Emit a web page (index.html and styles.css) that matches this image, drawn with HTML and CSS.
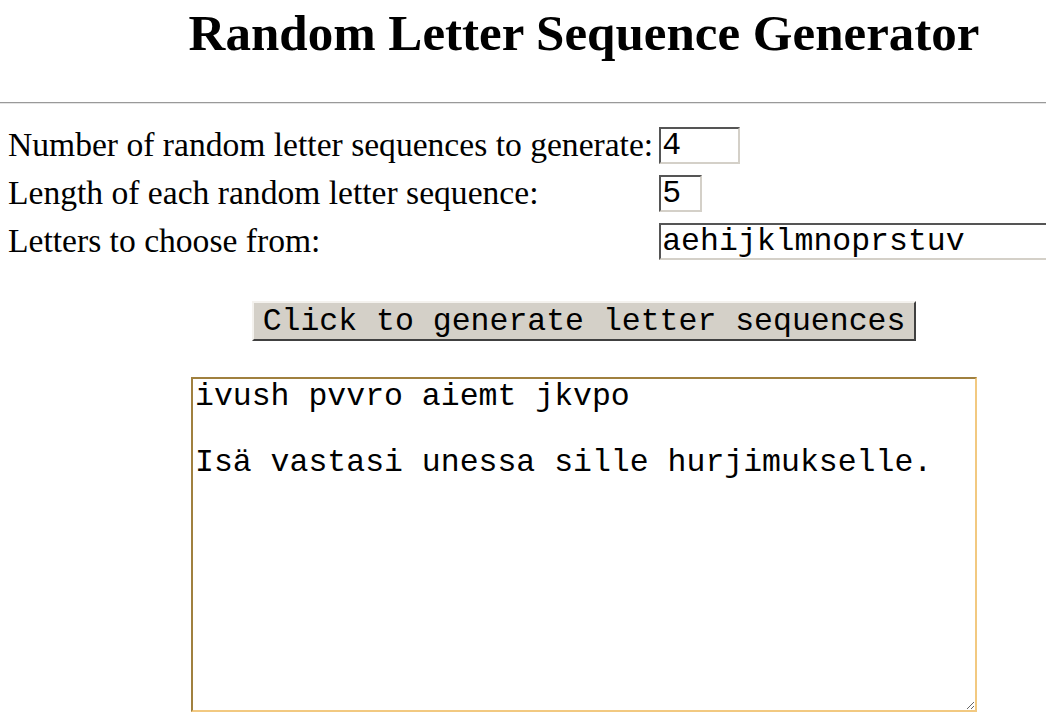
FILE: index.html
```html
<!DOCTYPE html>
<html lang="en">
<head>
    <meta charset="UTF-8">
    <title>Random Letter Sequence Generator</title>
    <link rel="stylesheet" href="styles.css">
</head>
<body>
    <div class="page">
        <h1 class="title">Random Letter Sequence Generator</h1>
        <hr class="rule">
        <div class="settings">
            <label for="count">Number of random letter sequences to generate:</label>
            <input type="text" id="count" class="field field-count" value="4">

            <label for="length">Length of each random letter sequence:</label>
            <input type="text" id="length" class="field field-length" value="5">

            <label for="letters">Letters to choose from:</label>
            <input type="text" id="letters" class="field field-letters" value="aehijklmnoprstuv">
        </div>
        <div class="actions">
            <button type="button" class="generate" onclick="generate();">Click to generate letter sequences</button>
        </div>
        <textarea id="output" class="output" spellcheck="false">ivush pvvro aiemt jkvpo

Isä vastasi unessa sille hurjimukselle.</textarea>
    </div>
    <script>
        function generate() {
            const count = parseInt(document.getElementById('count').value) || 0;
            const length = parseInt(document.getElementById('length').value) || 0;
            const letters = document.getElementById('letters').value;
            const words = [];
            for (let i = 0; i < count; i++) {
                let word = '';
                for (let j = 0; j < length; j++) {
                    word += letters.charAt(Math.floor(Math.random() * letters.length));
                }
                words.push(word);
            }
            document.getElementById('output').value = words.join(' ') + '\n\n';
        }

        // Put the caret at the end of the output, as after typing
        const output = document.getElementById('output');
        output.focus();
        output.setSelectionRange(output.value.length, output.value.length);
    </script>
</body>
</html>
```

FILE: styles.css
```css
html, body {
    margin: 0;
    overflow: hidden;
    background: #fff;
}

body {
    font-family: 'Liberation Serif', 'Times New Roman', serif;
    color: #000;
}

.page {
    width: 1168px;
}

.title {
    margin: 0;
    padding-top: 4px;
    font-size: 51px;
    line-height: 58px;
    text-align: center;
}

.rule {
    margin: 40px 0 0 0;
    border: 0;
    border-top: 1px solid #999;
    border-bottom: 1px solid #e4e4e4;
    height: 0;
}

.settings {
    display: grid;
    grid-template-columns: auto auto;
    justify-content: start;
    align-items: center;
    column-gap: 6px;
    row-gap: 10px;
    margin: 22px 0 0 8px;
    font-size: 33.6px;
}

.field {
    box-sizing: border-box;
    height: 37px;
    margin: 0;
    padding: 0 1px;
    font-family: 'Liberation Mono', 'Courier New', monospace;
    font-size: 31.5px;
    color: #000;
    background: #fff;
    border: 2px solid;
    border-color: #555 #d4d0c8 #d4d0c8 #555;
    outline: none;
}

.field-count { width: 81px; }
.field-length { width: 43px; }
.field-letters { width: 420px; }

.actions {
    text-align: center;
    margin-top: 41px;
}

.generate {
    box-sizing: border-box;
    height: 40px;
    padding: 0 9px;
    font-family: 'Liberation Mono', 'Courier New', monospace;
    font-size: 31.5px;
    color: #000;
    background: #d4d0c8;
    border: 2px solid;
    border-color: #f4f2ee #404040 #404040 #f4f2ee;
    border-radius: 0;
}

.output {
    display: block;
    box-sizing: border-box;
    width: 786px;
    height: 335px;
    margin: 36px auto 0 auto;
    padding: 1px 2px;
    font-family: 'Liberation Mono', 'Courier New', monospace;
    font-size: 31.5px;
    line-height: 33px;
    color: #000;
    background: #fff;
    border: 2px solid;
    border-color: #a0803f #f2c981 #f2c981 #a0803f;
    outline: none;
    resize: both;
    caret-color: #000;
}
```
